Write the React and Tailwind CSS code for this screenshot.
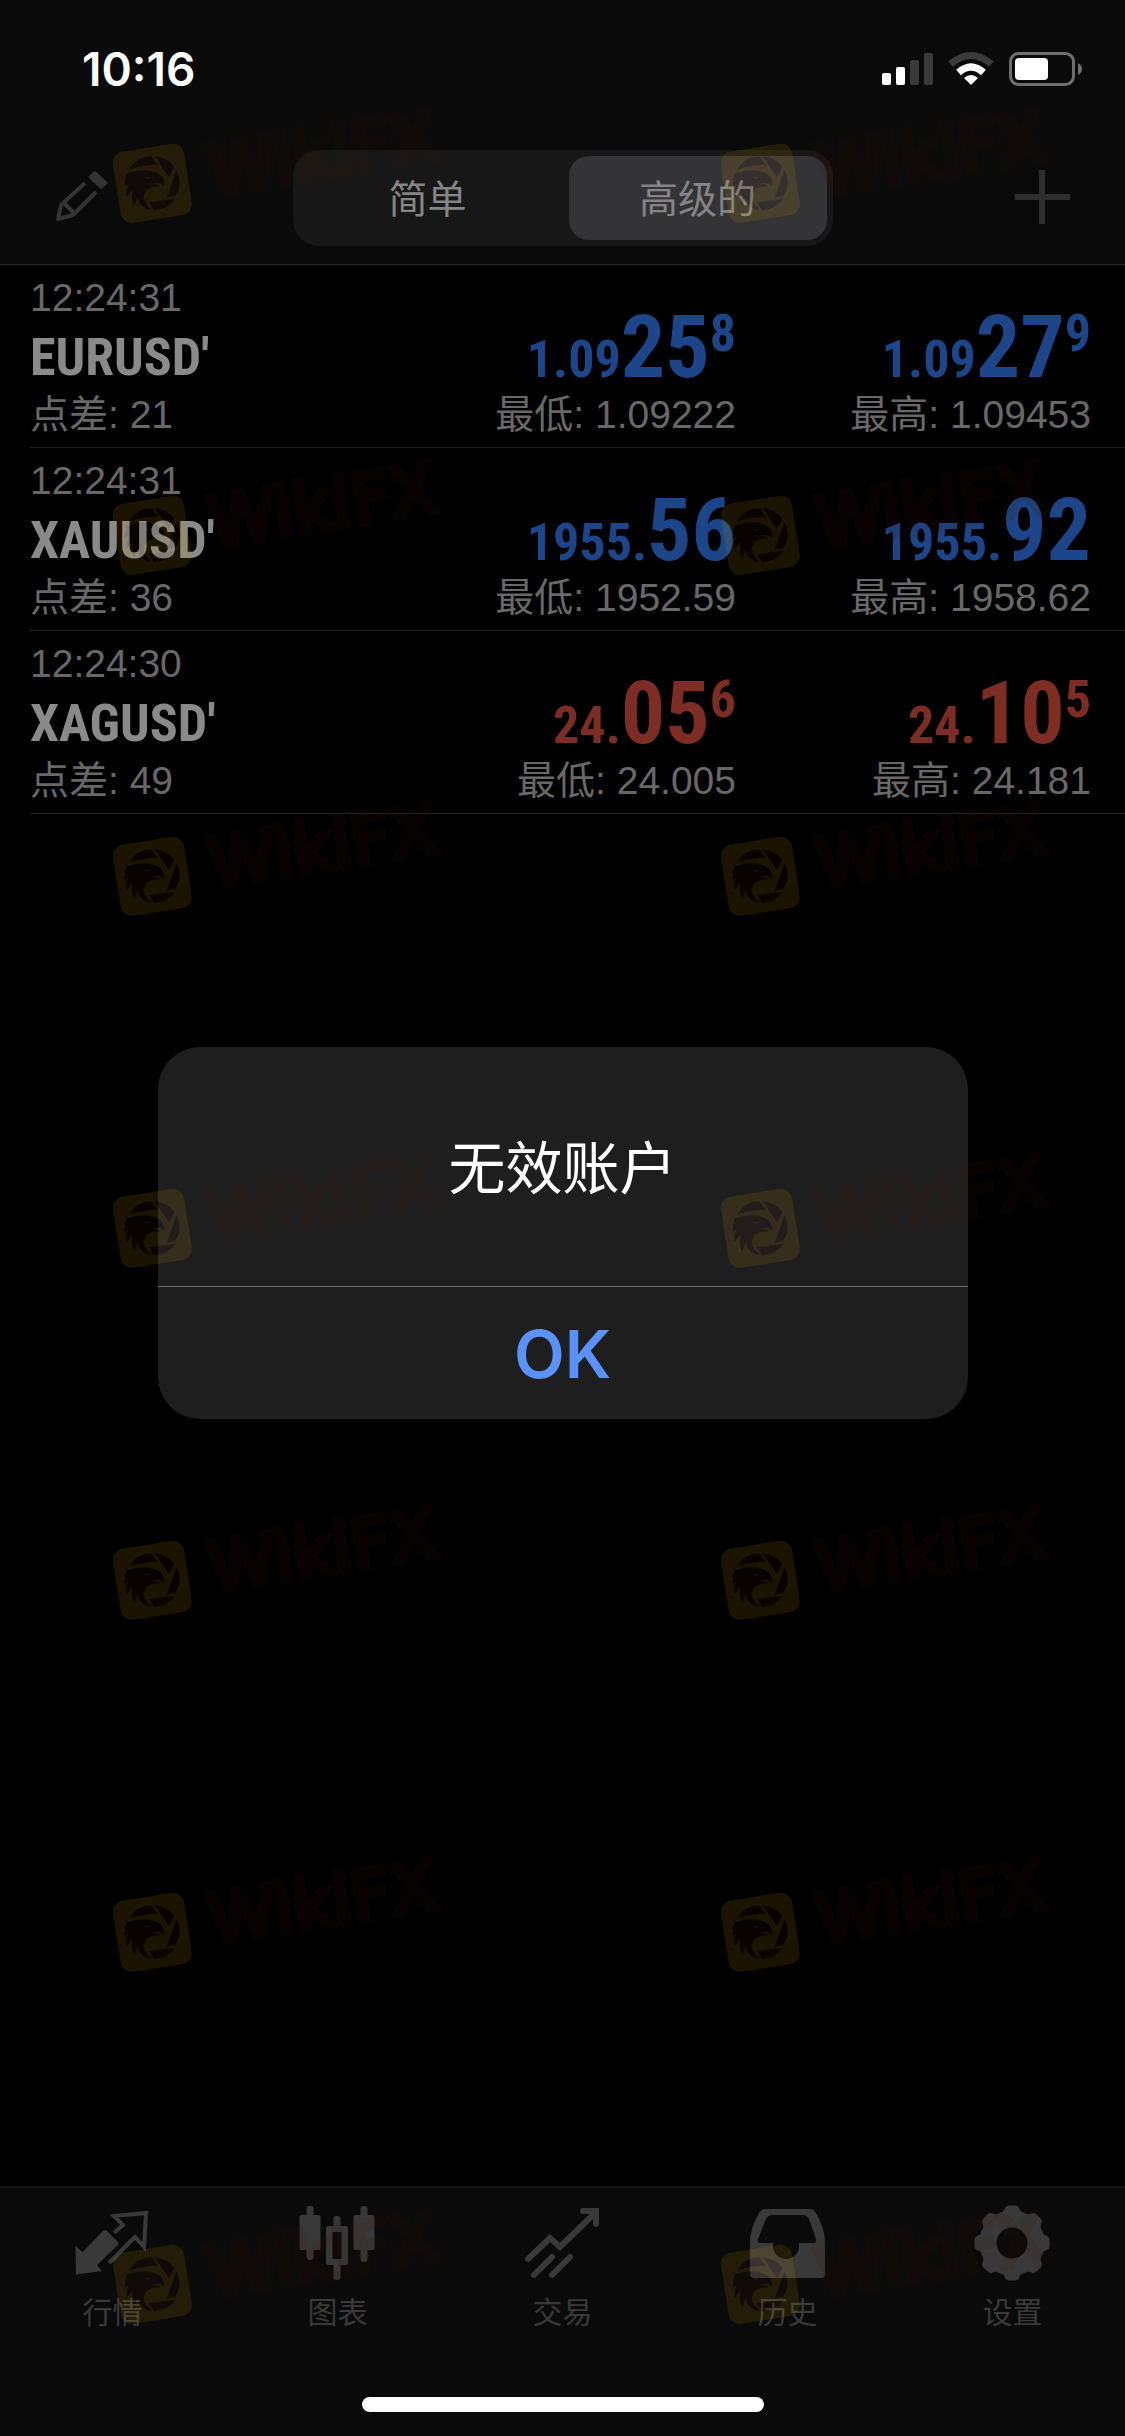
import React from "react";

const quotes = [
  {
    time: "12:24:31", symbol: "EURUSD'", spread: 21, up: true,
    bid: ["1.09", "25", "8"], ask: ["1.09", "27", "9"], low: "1.09222", high: "1.09453",
  },
  {
    time: "12:24:31", symbol: "XAUUSD'", spread: 36, up: true,
    bid: ["1955.", "56", ""], ask: ["1955.", "92", ""], low: "1952.59", high: "1958.62",
  },
  {
    time: "12:24:30", symbol: "XAGUSD'", spread: 49, up: false,
    bid: ["24.", "05", "6"], ask: ["24.", "10", "5"], low: "24.005", high: "24.181",
  },
];

const condensed = "font-['Roboto_Condensed','Liberation_Sans',sans-serif] font-bold";
const sans = "font-['Liberation_Sans','Noto_Sans_CJK_SC',sans-serif]";

function StatusBar() {
  return (
    <div className="flex h-[132px] items-center justify-between pt-1.5 pl-[82px] pr-[43px] text-white">
      <span className="font-['Inter',sans-serif] text-[46px] font-semibold leading-none">10:16</span>
      <svg className="h-9 w-[201px]" viewBox="0 0 201 36" aria-hidden="true">
        <g fill="#fff">
          <rect x="1" y="22" width="9" height="12" rx="2" />
          <rect x="15" y="16" width="9" height="18" rx="2" />
          <g fill="#3a3a3a">
            <rect x="29" y="9" width="9" height="25" rx="2" />
            <rect x="43" y="2" width="9" height="32" rx="2" />
          </g>
          <path d="M90 34 L83 27 Q90 21 97 27 Z" />
        </g>
        <path d="M69.500 13 Q90 -4 110.500 13" fill="none" stroke="#3a3a3a" strokeWidth="7" />
        <path d="M77.500 21.500 Q90 10.500 102.500 21.500" fill="none" stroke="#fff" strokeWidth="7" />
        <rect x="129.500" y="2.500" width="63" height="31" rx="8" fill="none" stroke="#6e6e6e" strokeWidth="3" />
        <rect x="134" y="7" width="33" height="22" rx="4" fill="#fff" />
        <path d="M197 12 Q201 14 201 18 Q201 22 197 24 Z" fill="#6e6e6e" />
      </svg>
    </div>
  );
}

function NavBar() {
  return (
    <nav className="flex h-[132px] items-center justify-between px-[52px]">
      <button aria-label="编辑" className="size-[60px]">
        <svg viewBox="0 0 60 60" className="size-full" fill="none" stroke="#343434" strokeWidth="4">
          <path d="M33 15 L9 37 L6 51 L21 47 L44 24" strokeLinejoin="round" />
          <path d="M12 35 L23 46" />
          <path d="M37.500 9 L43 4 L54.500 15 L49 20 Z" fill="#343434" strokeWidth="2" strokeLinejoin="round" />
        </svg>
      </button>
      <div className="flex h-24 w-[540px] justify-between rounded-[26px] bg-[#171717] p-1.5 font-['Noto_Sans_CJK_SC',sans-serif] text-[39px] leading-none text-[#858585]">
        <button className="w-[258px] pb-1">简单</button>
        <button className="w-[258px] rounded-[20px] bg-[#343436] pb-1" aria-pressed="true">高级的</button>
      </div>
      <button aria-label="添加" className="size-[60px]">
        <svg viewBox="0 0 60 60" className="size-full" stroke="#2e2e2e" strokeWidth="6">
          <path d="M2 29 H57 M29 2 V56" />
        </svg>
      </button>
    </nav>
  );
}

function Price({ parts, up }) {
  return (
    <div className={`${condensed} flex items-baseline justify-end self-end text-[52px] ${up ? "text-[#1d468a]" : "text-[#7e2d24]"}`}>
      <span className="leading-10">{parts[0]}</span>
      <span className="text-[88px] leading-[80px]">{parts[1]}</span>
      {parts[2] && <span className="self-start leading-[53px]">{parts[2]}</span>}
    </div>
  );
}

function QuoteRow({ q }) {
  return (
    <li className={`${sans} ml-[30px] grid grid-cols-[1fr_355px_355px] grid-rows-[120px_60px] border-b border-[#222] pt-0.5 pr-[34px] text-[39px] text-[#686868]`}>
      <div>
        <div className="leading-[62px]">{q.time}</div>
        <div className={`${condensed} text-[52px] leading-[58px] text-[#8a8a8a]`}>{q.symbol}</div>
      </div>
      <Price parts={q.bid} up={q.up} />
      <Price parts={q.ask} up={q.up} />
      <div className="h-[56px] leading-[56px]">点差: {q.spread}</div>
      <div className="h-[56px] text-right leading-[56px]">最低: {q.low}</div>
      <div className="h-[56px] text-right leading-[56px]">最高: {q.high}</div>
    </li>
  );
}

const tabs = [
  {
    label: "行情",
    icon: (
      <>
        <path d="M2.500 42 L9.500 48 L30 27 Q32 25 34 27 L45 38 Q46 40 45 41 L24 61 L29 67 L3 70.500 Z" fill="currentColor" />
        <path d="M41 29 L50 21 L41 12 L73 9 L71 43 L62 33 L36 59" fill="none" stroke="currentColor" strokeWidth="4" />
      </>
    ),
  },
  {
    label: "图表",
    icon: (
      <g fill="currentColor">
        <rect x="1.500" y="11" width="21" height="35" rx="2" />
        <rect x="8.500" y="2" width="7" height="54" rx="3" />
        <rect x="55.500" y="11" width="21" height="35" rx="2" />
        <rect x="62.500" y="2" width="7" height="56" rx="3" />
        <rect x="35.500" y="12" width="7" height="14" rx="3" />
        <rect x="35.500" y="58" width="7" height="18" rx="3" />
        <path fillRule="evenodd" d="M30 22 H48 Q50 22 50 24 V59 Q50 61 48 61 H30 Q28 61 28 59 V24 Q28 22 30 22 Z M34.500 28 V55 H43.500 V28 Z" />
      </g>
    ),
  },
  {
    label: "交易",
    icon: (
      <g fill="none" stroke="currentColor" strokeWidth="6" strokeLinecap="round">
        <path d="M5 55 L27 34 L37 43 L72 9" strokeLinejoin="miter" />
        <path d="M60 7 H73 V20" />
        <path d="M11 71 L29 53 M29 71 L47 53" />
      </g>
    ),
  },
  {
    label: "历史",
    icon: (
      <path
        fill="currentColor"
        fillRule="evenodd"
        d="M18 5 H62 Q66 5 68 9 Q77 25 77 38 V70 Q77 74 73 74 H6 Q2 74 2 70 V38 Q2 25 11 9 Q13 5 18 5 Z M24 11 Q20 11 18 15 L10 35 Q9 39 13 39 H25 V42 A13 13 0 0 0 51 42 V39 H65 Q69 39 68 35 L61 15 Q59 11 55 11 Z"
      />
    ),
  },
  {
    label: "设置",
    icon: (
      <g fill="currentColor">
        <circle cx="39" cy="39" r="24" fill="none" stroke="currentColor" strokeWidth="17" />
        {[0, 45, 90, 135, 180, 225, 270, 315].map((a) => (
          <path key={a} transform={`rotate(${a} 39 39)`} d="M27 9 Q31 8 32 4 Q33 1.500 36 1.500 H42 Q45 1.500 46 4 Q47 8 51 9 L48 16 H30 Z" />
        ))}
      </g>
    ),
  },
];

function TabBar() {
  return (
    <footer className="border-t-2 border-[#131313] bg-[#0a0a0a]">
      <nav className="grid grid-cols-5 pt-4">
        {tabs.map((t) => (
          <button key={t.label} className="flex flex-col items-center gap-1 text-[#393939]">
            <svg className="size-20" viewBox="0 0 80 80" aria-hidden="true">{t.icon}</svg>
            <span className="font-['Noto_Sans_CJK_SC',sans-serif] text-[30px] leading-[44px]">{t.label}</span>
          </button>
        ))}
      </nav>
      <div className="mx-auto mt-[65px] mb-6 h-[15px] w-[402px] rounded-full bg-white" />
    </footer>
  );
}

function Alert() {
  return (
    <div role="alertdialog" aria-labelledby="alert-title" className="w-[810px] overflow-hidden rounded-[42px] bg-[#1e1e1e]">
      <h1 id="alert-title" className="flex h-[240px] items-center justify-center border-b border-[#6a6a6a] pb-1 font-['Noto_Sans_CJK_SC',sans-serif] text-[57px] font-normal text-white">
        无效账户
      </h1>
      <button className="h-[132px] w-full pt-0.5 font-['Inter',sans-serif] text-[66px] font-semibold leading-none text-[#5b92fa]">OK</button>
    </div>
  );
}

function Mark() {
  return (
    <svg className="h-[180px] w-[380px] opacity-[0.13]" viewBox="0 -120 1140 540">
      <rect x="49" y="136" width="216" height="216" rx="34" fill="#c89a00" transform="rotate(-9 157 244)" />
      <g fill="#3d1700">
        <path d="M87 202 Q108 166 153 162 L173 188 Q130 188 87 202 Z" />
        <path d="M164 162 Q204 168 223 194 L207 226 Z" />
        <path d="M229 205 Q251 245 225 282 L201 286 Z" />
        <path d="M147 301 L226 290 Q205 322 162 325 Z" />
        <path d="M80 214 Q120 201 152 207 Q186 213 193 240 L192 252 Q184 242 170 243 L156 246 Q174 245 180 254 Q150 251 138 267 Q124 286 141 308 L154 325 Q120 320 112 285 L104 312 Q92 300 97 262 L80 285 Q76 270 85 248 L74 254 Q74 230 80 214 Z" />
      </g>
      <path d="M130 222 Q142 228 152 224 Q146 236 130 222 Z" fill="#c89a00" />
      <text
        x="336"
        y="280"
        transform="rotate(-9 336 280)"
        fontFamily="DejaVu Sans, sans-serif"
        fontSize="206"
        fill="#3d1700"
        stroke="#3d1700"
        strokeWidth="22"
        strokeLinejoin="round"
      >
        WikiFX
      </text>
    </svg>
  );
}

function MarkRow({ tall }) {
  return (
    <div className={`flex gap-[228px] pl-[100px] ${tall ? "h-[352px]" : "h-[341px]"}`}>
      <Mark />
      <Mark />
    </div>
  );
}

export default function App() {
  return (
    <div className="relative flex min-h-screen flex-col overflow-hidden bg-black">
      <header className="border-b border-[#2a2a2a] bg-[#0a0a0a]">
        <StatusBar />
        <NavBar />
      </header>
      <main className="flex flex-1 flex-col">
        <ul>
          {quotes.map((q) => (
            <QuoteRow key={q.symbol} q={q} />
          ))}
        </ul>
        <div className="flex justify-center pt-[233px]">
          <Alert />
        </div>
      </main>
      <TabBar />
      <div aria-hidden="true" className="pointer-events-none absolute inset-0 overflow-hidden pt-[62px] [&_svg]:shrink-0">
        {[true, false, true, true, true, true, true].map((tall, i) => (
          <MarkRow key={i} tall={tall} />
        ))}
      </div>
    </div>
  );
}
